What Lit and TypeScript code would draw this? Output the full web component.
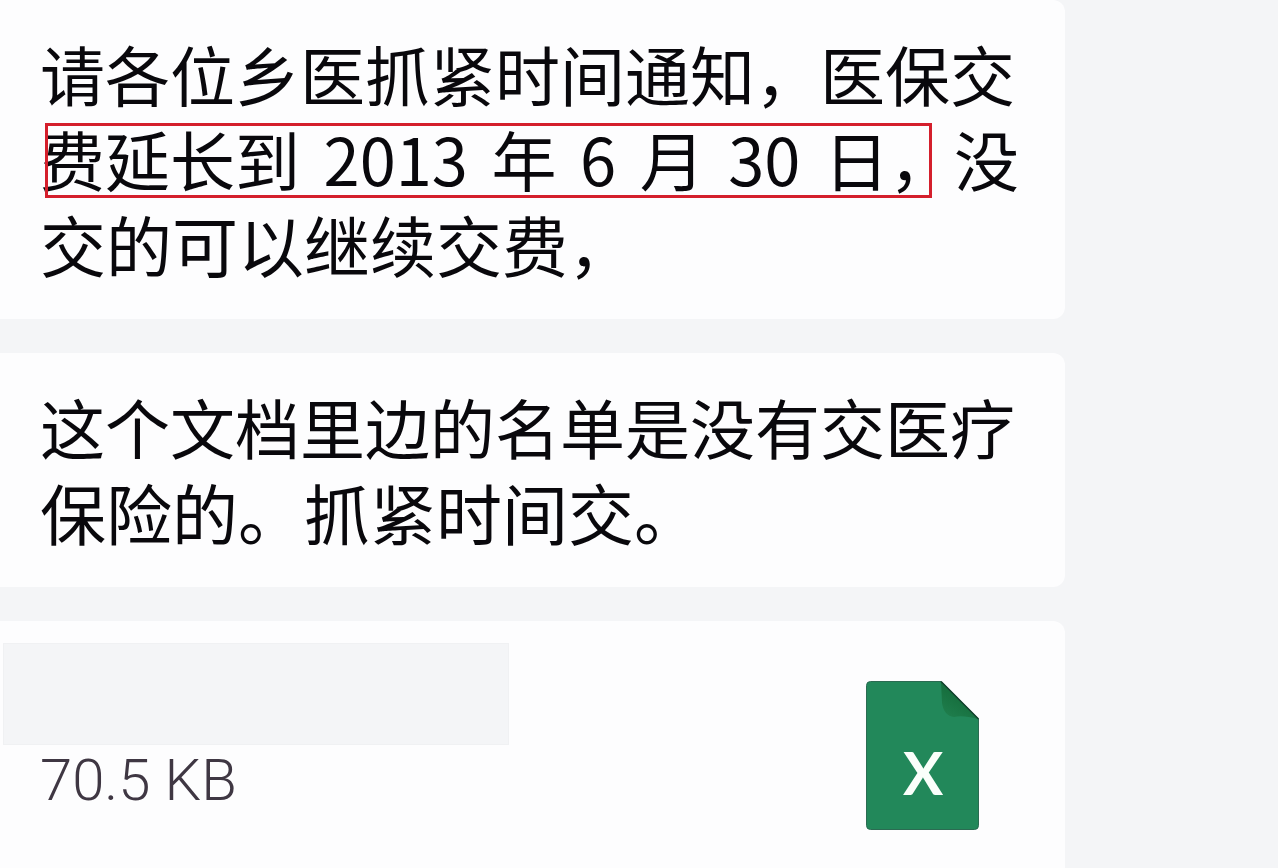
import { LitElement, html, css } from "lit";
import { customElement } from "lit/decorators.js";

@customElement("app-root")
export class AppRoot extends LitElement {
  static styles = css`
    :host {
      display: block;
      min-height: 100vh;
      background: #f4f5f7;
      color: #09080c;
      font-family: "Noto Sans CJK SC", sans-serif;
      overflow: hidden;
    }
    .thread {
      display: flex;
      flex-direction: column;
      gap: 34px;
      width: 83.3%;
      min-height: 100vh;
    }
    .card {
      background: #fdfdfe;
      border-radius: 0 12px 12px 0;
    }
    .message {
      padding: 31px 0 33px 40px;
    }
    .message p {
      margin: 0;
      font-size: 65px;
      line-height: 85px;
      white-space: nowrap;
    }
    .line {
      display: block;
    }
    .closing {
      font-size: 66px;
    }
    .num {
      margin: 0 9px;
    }
    .marked {
      position: relative;
    }
    .marked::after {
      content: "";
      position: absolute;
      inset: 12px 22px 7px 5px;
      border: 3px solid #d41f2c;
    }
    .file {
      flex: 1;
      display: flex;
      justify-content: space-between;
      align-items: flex-start;
      padding: 22px 86px 38px 3px;
      border-bottom-right-radius: 0;
    }
    .hidden-name {
      width: 506px;
      height: 102px;
      background: #f4f5f7;
      box-shadow: inset 0 0 0 1px #f0f1f3;
    }
    .size {
      margin: 0 0 0 37px;
      font: 300 58px/70px Roboto, sans-serif;
      color: #3f3743;
    }
    .icon {
      display: block;
      width: 113px;
      height: 149px;
      margin-top: 38px;
    }
    .letter {
      font: 700 60px Lato, sans-serif;
    }
  `;

  render() {
    return html`
      <main class="thread">
        <article class="card message">
          <p>
            <span class="line">请各位乡医抓紧时间通知，医保交</span>
            <span class="line"
              ><span class="marked"
                >费延长到 <span class="num">2013</span> 年
                <span class="num">6</span> 月 <span class="num">30</span> 日，</span
              >没</span
            >
            <span class="line closing">交的可以继续交费，</span>
          </p>
        </article>
        <article class="card message">
          <p>
            <span class="line">这个文档里边的名单是没有交医疗</span>
            <span class="line closing">保险的。抓紧时间交。</span>
          </p>
        </article>
        <article class="card file">
          <div>
            <div class="hidden-name"></div>
            <p class="size">70.5 KB</p>
          </div>
          <svg class="icon" viewBox="0 0 113 149" aria-hidden="true">
            <defs>
              <linearGradient id="fold" x1="0.6" y1="0.2" x2="0.1" y2="1">
                <stop offset="0.3" stop-color="#17703f" />
                <stop offset="1" stop-color="#20804f" />
              </linearGradient>
            </defs>
            <path
              d="M4.500 .5H75L112.500 38V144.500Q112.500 148.500 108.500 148.500H4.500Q.5 148.500 .5 144.500V4.500Q.5 .5 4.500 .5Z"
              fill="#22885a"
              stroke="#2b6b52"
            />
            <path d="M75 1L76 22Q78 35 88 36Q97 34 112 38Z" fill="url(#fold)" />
            <path d="M75 .5L112.500 38" stroke="#12402c" stroke-width="1.500" />
            <text class="letter" x="57" y="114" text-anchor="middle" fill="#fafffb">X</text>
          </svg>
        </article>
      </main>
    `;
  }
}
